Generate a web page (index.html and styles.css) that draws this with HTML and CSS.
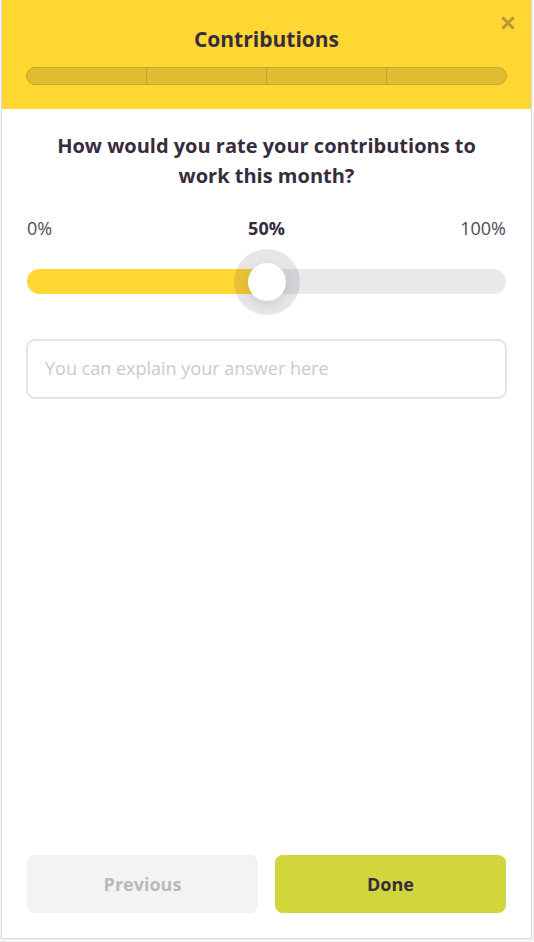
FILE: index.html
```html
<!DOCTYPE html>
<html lang="en">
<head>
    <meta charset="UTF-8">
    <meta name="viewport" content="width=device-width, initial-scale=1.0">
    <title>Contributions</title>
    <link rel="stylesheet" href="styles.css">
</head>
<body>
    <form class="survey">
        <header class="header">
            <button type="button" class="close" aria-label="Close">
                <svg viewBox="0 0 14 14" width="14" height="14">
                    <path d="M1.5 1.5L12.5 12.5M12.5 1.5L1.5 12.5"/>
                </svg>
            </button>
            <h1>Contributions</h1>
            <ol class="steps">
                <li></li>
                <li></li>
                <li></li>
                <li></li>
            </ol>
        </header>
        <main class="content">
            <h2><label for="rating">How would you rate your contributions to work this month?</label></h2>
            <div class="scale">
                <span>0%</span>
                <output class="value" id="ratingValue" for="rating">50%</output>
                <span>100%</span>
            </div>
            <input type="range" class="slider" id="rating" min="0" max="100" value="50">
            <input type="text" class="answer" aria-label="Explain your answer" placeholder="You can explain your answer here">
        </main>
        <footer class="footer">
            <button type="button" class="btn" disabled>Previous</button>
            <button type="submit" class="btn btn-done">Done</button>
        </footer>
    </form>
    <script>
        var rating = document.getElementById('rating');
        var ratingValue = document.getElementById('ratingValue');

        rating.oninput = function(){
            ratingValue.value = rating.value + '%';
            rating.style.setProperty('--fill', rating.value + '%');
        }
    </script>
</body>
</html>
```
FILE: styles.css
```css
*{
    margin: 0;
    padding: 0;
    box-sizing: border-box;
}
body{
    padding: 0 2px 3px 1px;
    background-color: #f4f4f4;
    font-family: "Open Sans", "Noto Sans", sans-serif;
    color: #372c3e;
}
.survey{
    display: flex;
    flex-direction: column;
    min-height: calc(100vh - 3px);
    border: 1px solid #dcdcdc;
    border-top: 0;
    background-color: #fff;
}
.header{
    position: relative;
    padding: 24px 24px;
    background-color: #ffd733;
    text-align: center;
}
.header h1{
    font-size: 21px;
    line-height: 30px;
}
.close{
    position: absolute;
    top: 12px;
    right: 12px;
    padding: 4px;
    border: 0;
    background: none;
    cursor: pointer;
}
.close svg{
    display: block;
    fill: none;
    stroke: #b69732;
    stroke-width: 3;
}
.steps{
    display: flex;
    height: 18px;
    margin-top: 13px;
    border: 1px solid #c5a72f;
    border-radius: 9px;
    background-color: #dfbc30;
    list-style: none;
}
.steps li{
    flex: 1;
}
.steps li + li{
    border-left: 1px solid #c5a72f;
}
.content{
    flex: 1;
    padding: 22px 24px;
}
.content h2{
    padding: 0 24px;
    font-size: 20px;
    line-height: 30px;
    text-align: center;
}
.scale{
    display: grid;
    grid-template-columns: 1fr auto 1fr;
    margin-top: 24px;
    padding: 0 1px;
    font-size: 18px;
    line-height: 26px;
    color: #514958;
}
.scale span:last-child{
    text-align: right;
}
.scale .value{
    font-weight: bold;
    color: #372c3e;
}
.slider{
    --fill: 50%;
    -webkit-appearance: none;
    appearance: none;
    display: block;
    width: calc(100% - 2px);
    height: 25px;
    margin: 28px 1px 0;
    border-radius: 13px;
    background: linear-gradient(to right, #ffd733 var(--fill), #e9e9eb var(--fill));
    cursor: pointer;
}
.slider::-webkit-slider-thumb{
    -webkit-appearance: none;
    width: 38px;
    height: 38px;
    border-radius: 50%;
    background-color: #fff;
    box-shadow: 0 0 0 14px rgba(55, 44, 62, 0.12), 0 4px 10px rgba(55, 44, 62, 0.12);
}
.answer{
    display: block;
    width: 100%;
    height: 60px;
    margin-top: 45px;
    padding: 0 17px 2px;
    border: 2px solid #e4e4e4;
    border-radius: 9px;
    font-family: inherit;
    font-size: 18px;
    color: inherit;
}
.answer::placeholder{
    color: #cacacd;
}
.footer{
    display: flex;
    gap: 17px;
    padding: 0 25px 25px;
}
.btn{
    flex: 1;
    height: 58px;
    border: 0;
    border-radius: 8px;
    background-color: #f3f3f3;
    font-family: inherit;
    font-size: 18px;
    font-weight: bold;
    color: #bbb8be;
}
.btn-done{
    background-color: #d2d63d;
    color: #372c3e;
    cursor: pointer;
}
```
